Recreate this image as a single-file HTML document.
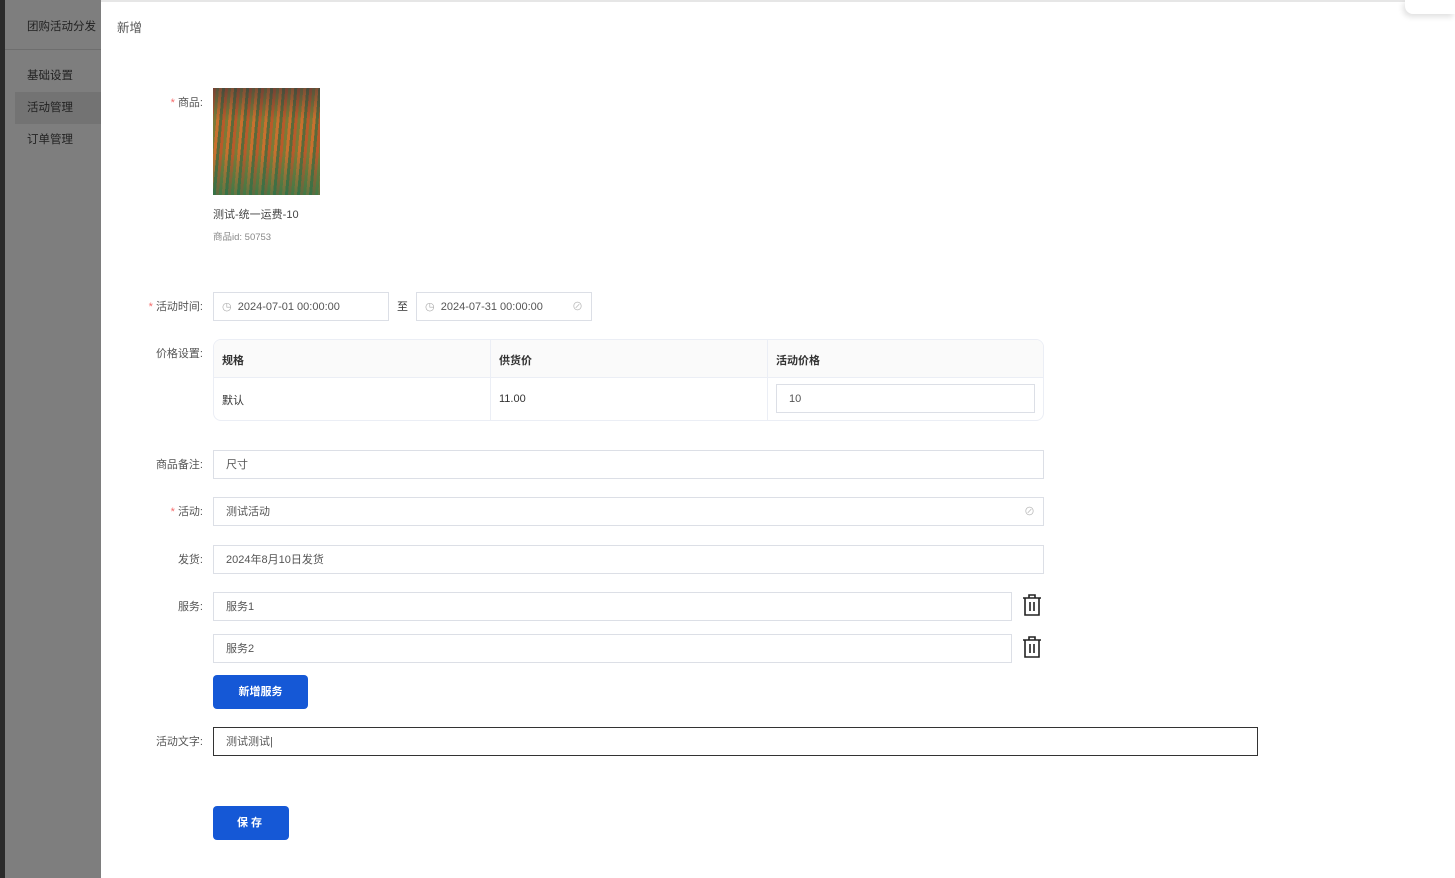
<!DOCTYPE html>
<html><head><meta charset="utf-8"><style>
*{box-sizing:border-box;margin:0;padding:0}
body{width:1455px;height:878px;overflow:hidden;background:#fff;font-family:"Liberation Sans","Noto Sans CJK SC",sans-serif;font-size:11px;color:#333;position:relative}
.abs{position:absolute}
.dark{left:0;top:0;width:5px;height:878px;background:#2b2b2b}
.side{left:5px;top:0;width:96px;height:878px;background:#7e7e7e}
.side .t{position:absolute;left:22px;top:18px;color:#222;font-size:11.5px}
.side .hr{position:absolute;left:0;top:49px;width:96px;height:1px;background:#6e6e6e}
.side .it{position:absolute;left:10px;width:86px;height:32px;line-height:32px;padding-left:12px;color:#222;font-size:11.5px}
.lbl{position:absolute;right:1252px;font-size:11px;color:#555;text-align:right;white-space:nowrap}
.lbl i{color:#f56c6c;font-style:normal;margin-right:3px}
.inp{position:absolute;border:1px solid #dcdfe6;height:29px;line-height:29px;padding-left:12px;color:#555;font-size:11px;background:#fff}
.btn{position:absolute;background:#1558d6;color:#fff;border-radius:4px;font-size:11px;font-weight:bold;text-align:center}
.tb{position:absolute;left:213px;top:339px;width:831px;height:82px;border:1px solid #ebeef5;border-radius:8px;overflow:hidden}
.tb .h{position:absolute;left:0;top:0;width:100%;height:38px;background:#fafafa;border-bottom:1px solid #ebeef5}
.tb .c{position:absolute;font-size:11px;color:#333}
.vl{position:absolute;top:0;width:1px;height:82px;background:#ebeef5}
</style></head><body>
<div class="abs dark"></div>
<div class="abs side">
<div class="t">团购活动分发</div><div class="hr"></div>
<div class="it" style="top:60px">基础设置</div>
<div class="it" style="top:92px;background:#737373">活动管理</div>
<div class="it" style="top:124px">订单管理</div>
</div>
<div class="abs" style="left:101px;top:0;width:1354px;height:2px;background:#e6e6e6"></div>
<div class="abs" style="left:1405px;top:0;width:50px;height:14px;background:#fff;border-bottom-left-radius:8px;box-shadow:-2px 3px 6px rgba(0,0,0,.12)"></div>
<div class="abs" style="left:117px;top:17px;font-size:12.5px;color:#555">新增</div>

<div class="lbl" style="top:94px"><i>*</i>商品:</div>
<div class="abs" style="left:213px;top:88px;width:107px;height:107px;background:repeating-linear-gradient(95deg,#b85a2a 0 3px,#7a7a38 3px 6px,#c8702e 6px 9px,#5a6a3a 9px 12px);"></div>
<div class="abs" style="left:213px;top:88px;width:107px;height:107px;background:linear-gradient(180deg,rgba(60,50,60,.55) 0%,rgba(0,0,0,0) 30%,rgba(0,0,0,0) 60%,rgba(30,120,80,.6) 100%)"></div>
<div class="abs" style="left:213px;top:206px;font-size:11px;color:#444">测试-统一运费-10</div>
<div class="abs" style="left:213px;top:229px;font-size:9.5px;color:#888">商品id: 50753</div>

<div class="lbl" style="top:298px"><i>*</i>活动时间:</div>
<div class="inp" style="left:213px;top:292px;width:176px;padding-left:8px"><span style="color:#aaa">◷</span>&nbsp; 2024-07-01 00:00:00</div>
<div class="abs" style="left:397px;top:298px;font-size:11px">至</div>
<div class="inp" style="left:416px;top:292px;width:176px;padding-left:8px"><span style="color:#aaa">◷</span>&nbsp; 2024-07-31 00:00:00<span style="position:absolute;right:8px;color:#bbb">⊘</span></div>

<div class="lbl" style="top:345px">价格设置:</div>
<div class="tb"><div class="h"></div>
<div class="vl" style="left:276px"></div><div class="vl" style="left:553px"></div>
<div class="c" style="left:8px;top:12px;font-weight:bold">规格</div>
<div class="c" style="left:285px;top:12px;font-weight:bold">供货价</div>
<div class="c" style="left:562px;top:12px;font-weight:bold">活动价格</div>
<div class="c" style="left:8px;top:52px">默认</div>
<div class="c" style="left:285px;top:53px">11.00</div>
<div class="inp" style="left:562px;top:44px;width:259px;height:29px">10</div>
</div>

<div class="lbl" style="top:456px">商品备注:</div>
<div class="inp" style="left:213px;top:450px;width:831px">尺寸</div>
<div class="lbl" style="top:503px"><i>*</i>活动:</div>
<div class="inp" style="left:213px;top:497px;width:831px">测试活动<span style="position:absolute;right:8px;color:#bbb">⊘</span></div>
<div class="lbl" style="top:551px">发货:</div>
<div class="inp" style="left:213px;top:545px;width:831px">2024年8月10日发货</div>
<div class="lbl" style="top:598px">服务:</div>
<div class="inp" style="left:213px;top:592px;width:799px">服务1</div>
<div class="inp" style="left:213px;top:634px;width:799px">服务2</div>
<svg class="abs" style="left:1021px;top:593px" width="22" height="24" viewBox="0 0 22 24" fill="none" stroke="#222" stroke-width="1.6"><path d="M2 5h18M8 5V2h6v3M4 5v17h14V5M9 9v9M13 9v9"/></svg>
<svg class="abs" style="left:1021px;top:635px" width="22" height="24" viewBox="0 0 22 24" fill="none" stroke="#222" stroke-width="1.6"><path d="M2 5h18M8 5V2h6v3M4 5v17h14V5M9 9v9M13 9v9"/></svg>
<div class="btn" style="left:213px;top:675px;width:95px;height:34px;line-height:34px">新增服务</div>
<div class="lbl" style="top:733px">活动文字:</div>
<div class="inp" style="left:213px;top:727px;width:1045px;border-color:#333">测试测试|</div>
<div class="btn" style="left:213px;top:806px;width:76px;height:34px;line-height:34px;letter-spacing:3px">保存</div>
</body></html>
